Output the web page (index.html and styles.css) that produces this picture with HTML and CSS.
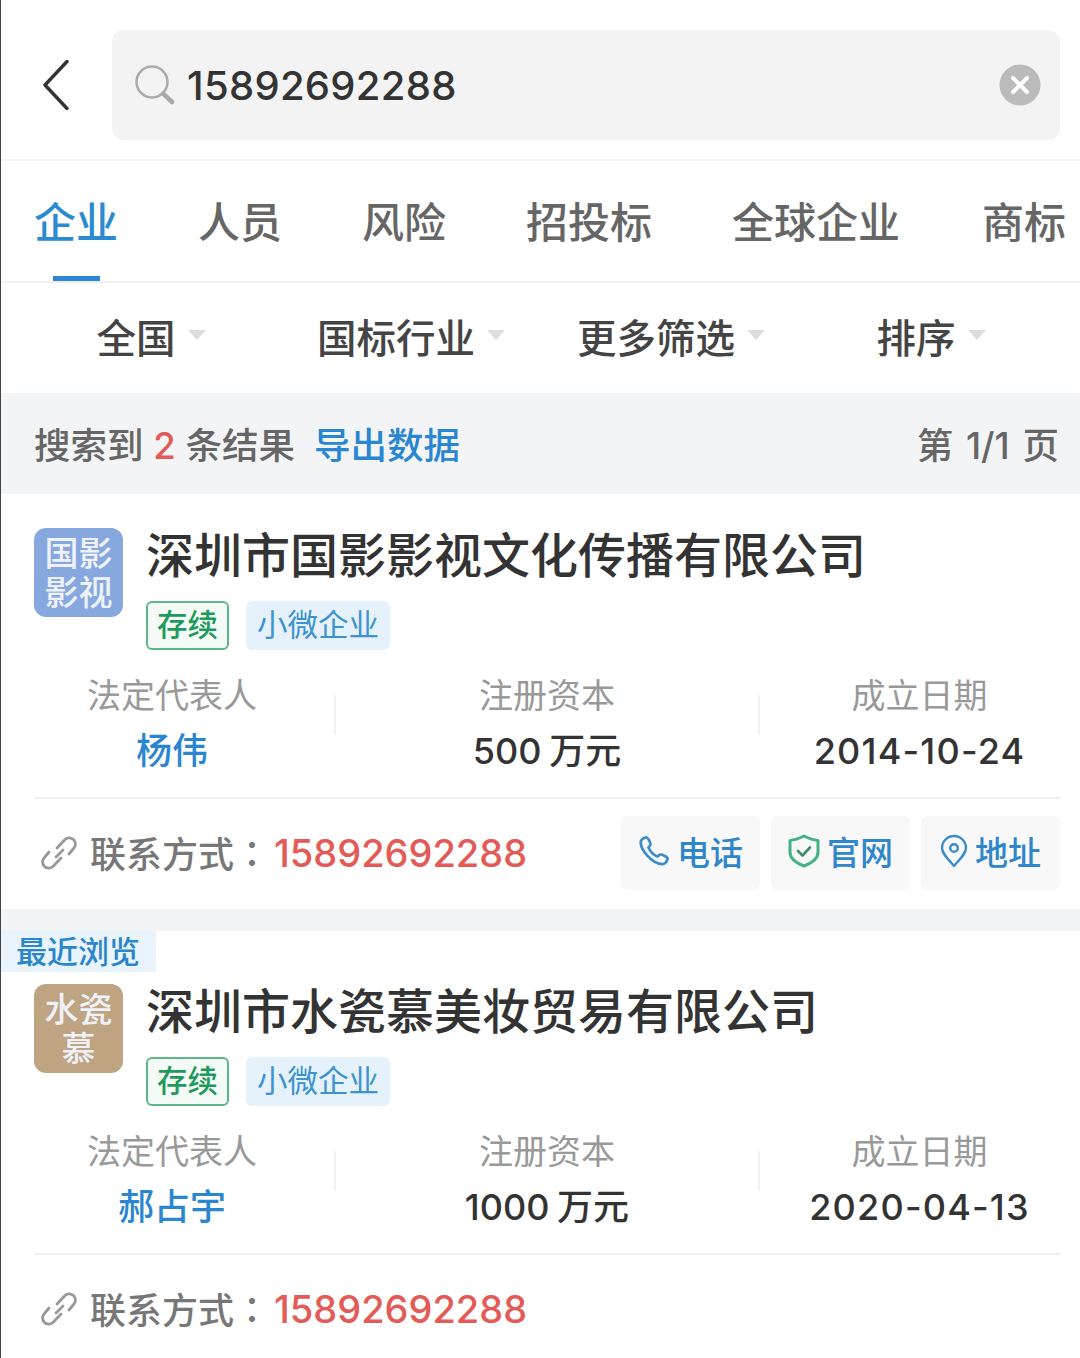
FILE: index.html
```html
<!DOCTYPE html>
<html lang="zh-CN">

<head>
  <meta charset="UTF-8">
  <meta name="viewport" content="width=device-width, initial-scale=1.0">
  <title>搜索结果</title>
  <link rel="stylesheet" href="styles.css">
</head>

<body>
  <header class="search-header">
    <svg class="back-icon" viewBox="0 0 26 50" width="26" height="50">
      <path d="M24 1.500 2 25l22 23.500" fill="none" stroke="#333" stroke-width="3.400" stroke-linecap="round" stroke-linejoin="round" />
    </svg>
    <div class="search-box">
      <svg class="search-icon" viewBox="0 0 40 40" width="40" height="40">
        <circle cx="17" cy="17" r="15.500" fill="none" stroke="#aaa" stroke-width="2.500" />
        <path d="M28 28.500 37 37" fill="none" stroke="#aaa" stroke-width="4.500" stroke-linecap="round" />
      </svg>
      <span class="search-text">15892692288</span>
      <svg class="clear-icon" viewBox="0 0 42 42" width="42" height="42">
        <circle cx="21" cy="21" r="20.500" fill="#bbb" />
        <path d="M14 14 28 28M28 14 14 28" fill="none" stroke="#fff" stroke-width="4" stroke-linecap="round" />
      </svg>
    </div>
  </header>

  <nav class="tabs">
    <a class="tab tab-active">企业</a>
    <a class="tab">人员</a>
    <a class="tab">风险</a>
    <a class="tab">招投标</a>
    <a class="tab">全球企业</a>
    <a class="tab">商标</a>
  </nav>

  <div class="filters">
    <div class="filter">全国<i class="arrow"></i></div>
    <div class="filter">国标行业<i class="arrow"></i></div>
    <div class="filter">更多筛选<i class="arrow"></i></div>
    <div class="filter">排序<i class="arrow"></i></div>
  </div>

  <div class="result-bar">
    <span>搜索到 <b class="count">2</b> 条结果</span>
    <a class="export">导出数据</a>
    <span class="pages">第 1/1 页</span>
  </div>

  <section class="card">
    <div class="card-top">
      <div class="logo logo-blue">国影<br>影视</div>
      <div>
        <h2 class="company">深圳市国影影视文化传播有限公司</h2>
        <div class="tags">
          <span class="tag tag-green">存续</span>
          <span class="tag tag-blue">小微企业</span>
        </div>
      </div>
    </div>
    <div class="info">
      <div class="info-cell">
        <div class="info-label">法定代表人</div>
        <div class="info-value person">杨伟</div>
      </div>
      <div class="info-cell">
        <div class="info-label">注册资本</div>
        <div class="info-value">500 万元</div>
      </div>
      <div class="info-cell">
        <div class="info-label">成立日期</div>
        <div class="info-value date">2014-10-24</div>
      </div>
    </div>
    <div class="contact">
      <svg class="link-icon" viewBox="0 0 38 40" width="38" height="40">
        <path d="M17 15 25 6.500a6 6 0 0 1 8.500 9L29 21M21 25 13 33.500a6 6 0 0 1-8.500-9L9 19M23 17l-7 7" fill="none" stroke="#999" stroke-width="2.800" stroke-linecap="round" />
      </svg>
      <span class="contact-label">联系方式<span class="colon" lang="zh-TW">：</span></span>
      <span class="phone">15892692288</span>
      <div class="actions">
        <a class="action">
          <svg viewBox="0 0 32 32" width="32" height="32">
            <path d="M3 5.500C5 3 7 2 9 2.500c1.500 1 3.500 5 3.500 7 0 1-1.500 2-2 3 1.500 3.500 5 7.500 9 9 1-.5 2-2 3-2 2 0 6 2 7 3.500.5 1.500-1.500 5-4 6C15 30 1 14 3 5.500Z" fill="none" stroke="#3a8ccb" stroke-width="2.700" stroke-linejoin="round" />
          </svg>
          电话
        </a>
        <a class="action">
          <svg viewBox="0 0 32 34" width="32" height="34">
            <path d="M16 2C20 4 25 6 30 6.500V18c0 6-6 11-14 14C8 29 2 24 2 18V6.500C7 6 12 4 16 2Z" fill="none" stroke="#44b384" stroke-width="3" stroke-linejoin="round" />
            <path d="m10 17 4.500 4.500L22 13.500" fill="none" stroke="#3c8f68" stroke-width="2.600" stroke-linecap="round" stroke-linejoin="round" />
          </svg>
          官网
        </a>
        <a class="action">
          <svg viewBox="0 0 28 34" width="28" height="34">
            <path d="M14 32C8 25 2 19.500 2 14a12 12 0 0 1 24 0c0 5.500-6 11-12 18Z" fill="none" stroke="#3a8ccb" stroke-width="2.400" stroke-linejoin="round" />
            <circle cx="14" cy="14" r="3.800" fill="none" stroke="#3a8ccb" stroke-width="2.400" />
          </svg>
          地址
        </a>
      </div>
    </div>
  </section>

  <div class="card-gap"></div>

  <section class="card card-recent">
    <div class="recent-tag">最近浏览</div>
    <div class="card-top">
      <div class="logo logo-brown">水瓷<br>慕</div>
      <div>
        <h2 class="company">深圳市水瓷慕美妆贸易有限公司</h2>
        <div class="tags">
          <span class="tag tag-green">存续</span>
          <span class="tag tag-blue">小微企业</span>
        </div>
      </div>
    </div>
    <div class="info">
      <div class="info-cell">
        <div class="info-label">法定代表人</div>
        <div class="info-value person">郝占宇</div>
      </div>
      <div class="info-cell">
        <div class="info-label">注册资本</div>
        <div class="info-value">1000 万元</div>
      </div>
      <div class="info-cell">
        <div class="info-label">成立日期</div>
        <div class="info-value date">2020-04-13</div>
      </div>
    </div>
    <div class="contact">
      <svg class="link-icon" viewBox="0 0 38 40" width="38" height="40">
        <path d="M17 15 25 6.500a6 6 0 0 1 8.500 9L29 21M21 25 13 33.500a6 6 0 0 1-8.500-9L9 19M23 17l-7 7" fill="none" stroke="#999" stroke-width="2.800" stroke-linecap="round" />
      </svg>
      <span class="contact-label">联系方式<span class="colon" lang="zh-TW">：</span></span>
      <span class="phone">15892692288</span>
    </div>
  </section>
</body>

</html>
```

FILE: styles.css
```css
* {
  box-sizing: border-box;
}

body {
  margin: 0;
  height: 100vh;
  overflow: hidden;
  border-left: 1px solid #444;
  background-color: white;
  color: #333;
  font-family: Inter, "Noto Sans CJK SC", sans-serif;
}

/* search header */

.search-header {
  display: flex;
  align-items: center;
  height: 161px;
  padding: 11px 20px 0 42px;
  border-bottom: 2px solid #f3f3f3;
}

.back-icon {
  margin-right: 43px;
}

.search-box {
  display: flex;
  flex: 1;
  align-items: center;
  height: 110px;
  padding: 0 19px 0 23px;
  border-radius: 12px;
  background-color: #f3f3f4;
}

.search-icon {
  margin-right: 12px;
}

.search-text {
  flex: 1;
  font-size: 40px;
  font-weight: 500;
  letter-spacing: 0.3px;
}

/* tabs */

.tabs {
  display: flex;
  gap: 80px;
  height: 122px;
  padding-left: 33px;
  border-bottom: 2px solid #f0f0f0;
  overflow: hidden;
}

.tab {
  position: relative;
  flex-shrink: 0;
  padding-top: 32px;
  color: #666;
  font-size: 42px;
  font-weight: 500;
  line-height: 60px;
}

.tab:last-child {
  margin-left: 2px;
}

.tab-active {
  color: #2a8bd2;
}

.tab-active::after {
  content: "";
  position: absolute;
  left: 19px;
  bottom: 0;
  width: 47px;
  height: 5px;
  background-color: #2a86d6;
}

/* filters */

.filters {
  display: flex;
  align-items: center;
  height: 110px;
  padding: 0 0 6px 20px;
  color: #444;
  font-size: 39.500px;
  font-weight: 500;
}

.filter {
  display: flex;
  align-items: center;
  justify-content: center;
  width: 260px;
}

.arrow {
  width: 0;
  height: 0;
  margin-left: 12px;
  border-top: 10px solid #ddd;
  border-left: 9px solid transparent;
  border-right: 9px solid transparent;
}

/* result summary */

.result-bar {
  display: flex;
  align-items: center;
  height: 101px;
  padding: 0 21px 0 33px;
  background-color: #f3f4f5;
  color: #666;
  font-size: 36.500px;
  font-weight: 500;
}

.count {
  color: #e25b57;
  font-weight: 500;
}

.export {
  margin-left: 19px;
  color: #2a86d0;
}

.pages {
  margin-left: auto;
  word-spacing: 3px;
}

/* company card */

.card {
  position: relative;
  padding-top: 34px;
}

.card-gap {
  height: 22px;
  background-color: #f3f4f5;
}

.card-recent {
  padding-top: 53px;
}

.card-top {
  display: flex;
  gap: 23px;
  padding-left: 33px;
}

.logo {
  flex-shrink: 0;
  width: 89px;
  height: 89px;
  padding-top: 6px;
  border-radius: 12px;
  color: #eef2f8;
  font-size: 34px;
  font-weight: 500;
  line-height: 39px;
  text-align: center;
}

.logo-blue {
  background-color: #87a8de;
}

.logo-brown {
  background-color: #bfa482;
}

.company {
  margin: 0;
  color: #333;
  font-size: 48px;
  font-weight: 500;
  line-height: 56px;
}

.tags {
  display: flex;
  gap: 17px;
  margin-top: 17px;
}

.tag {
  display: flex;
  align-items: center;
  justify-content: center;
  height: 49px;
  padding-bottom: 5px;
  border-radius: 6px;
  font-size: 30.500px;
}

.tag-green {
  width: 83px;
  border: 2px solid #5cb88a;
  background-color: #f4fbf7;
  color: #1f9a5c;
  font-weight: 500;
}

.tag-blue {
  width: 144px;
  background-color: #e6f2fb;
  color: #3d92d0;
}

.info {
  display: grid;
  grid-template-columns: 326px 424px 321px;
  margin: 24px 0 0 8px;
  text-align: center;
}

.info-cell {
  position: relative;
}

.info-cell + .info-cell::before {
  content: "";
  position: absolute;
  left: -1px;
  top: 21px;
  width: 2px;
  height: 40px;
  background-color: #f2f2f2;
}

.info-label {
  color: #999;
  font-size: 34px;
  line-height: 44px;
}

.info-value {
  margin-top: 11px;
  color: #333;
  font-size: 36px;
  font-weight: 500;
  line-height: 44px;
  word-spacing: -2px;
}

.date {
  letter-spacing: 1.200px;
}

.person {
  color: #2a86d0;
}

.contact {
  display: flex;
  align-items: center;
  height: 112px;
  margin: 24px 19px 0 33px;
  padding: 0 1px 3px 6px;
  border-top: 2px solid #f0f0f0;
}

.link-icon {
  margin-right: 12px;
}

.contact-label {
  margin-top: -2px;
  color: #777;
  font-size: 36px;
  font-weight: 500;
}

.colon {
  font-family: "Noto Sans CJK TC", sans-serif;
}

.phone {
  margin-left: 4px;
  color: #e25b57;
  font-size: 38px;
  font-weight: 500;
}

.actions {
  display: flex;
  gap: 11px;
  margin-left: auto;
}

.action {
  display: flex;
  align-items: center;
  justify-content: center;
  gap: 7px;
  width: 139px;
  height: 74px;
  padding-bottom: 4px;
  border-radius: 6px;
  background-color: #f8f8f9;
  color: #2f86c8;
  font-size: 33px;
  font-weight: 500;
}

.recent-tag {
  position: absolute;
  left: 0;
  top: 0;
  width: 155px;
  height: 41px;
  padding-left: 15px;
  background-color: #e8f3fc;
  color: #2a86c8;
  font-size: 31px;
  font-weight: 500;
  line-height: 41px;
}
```
